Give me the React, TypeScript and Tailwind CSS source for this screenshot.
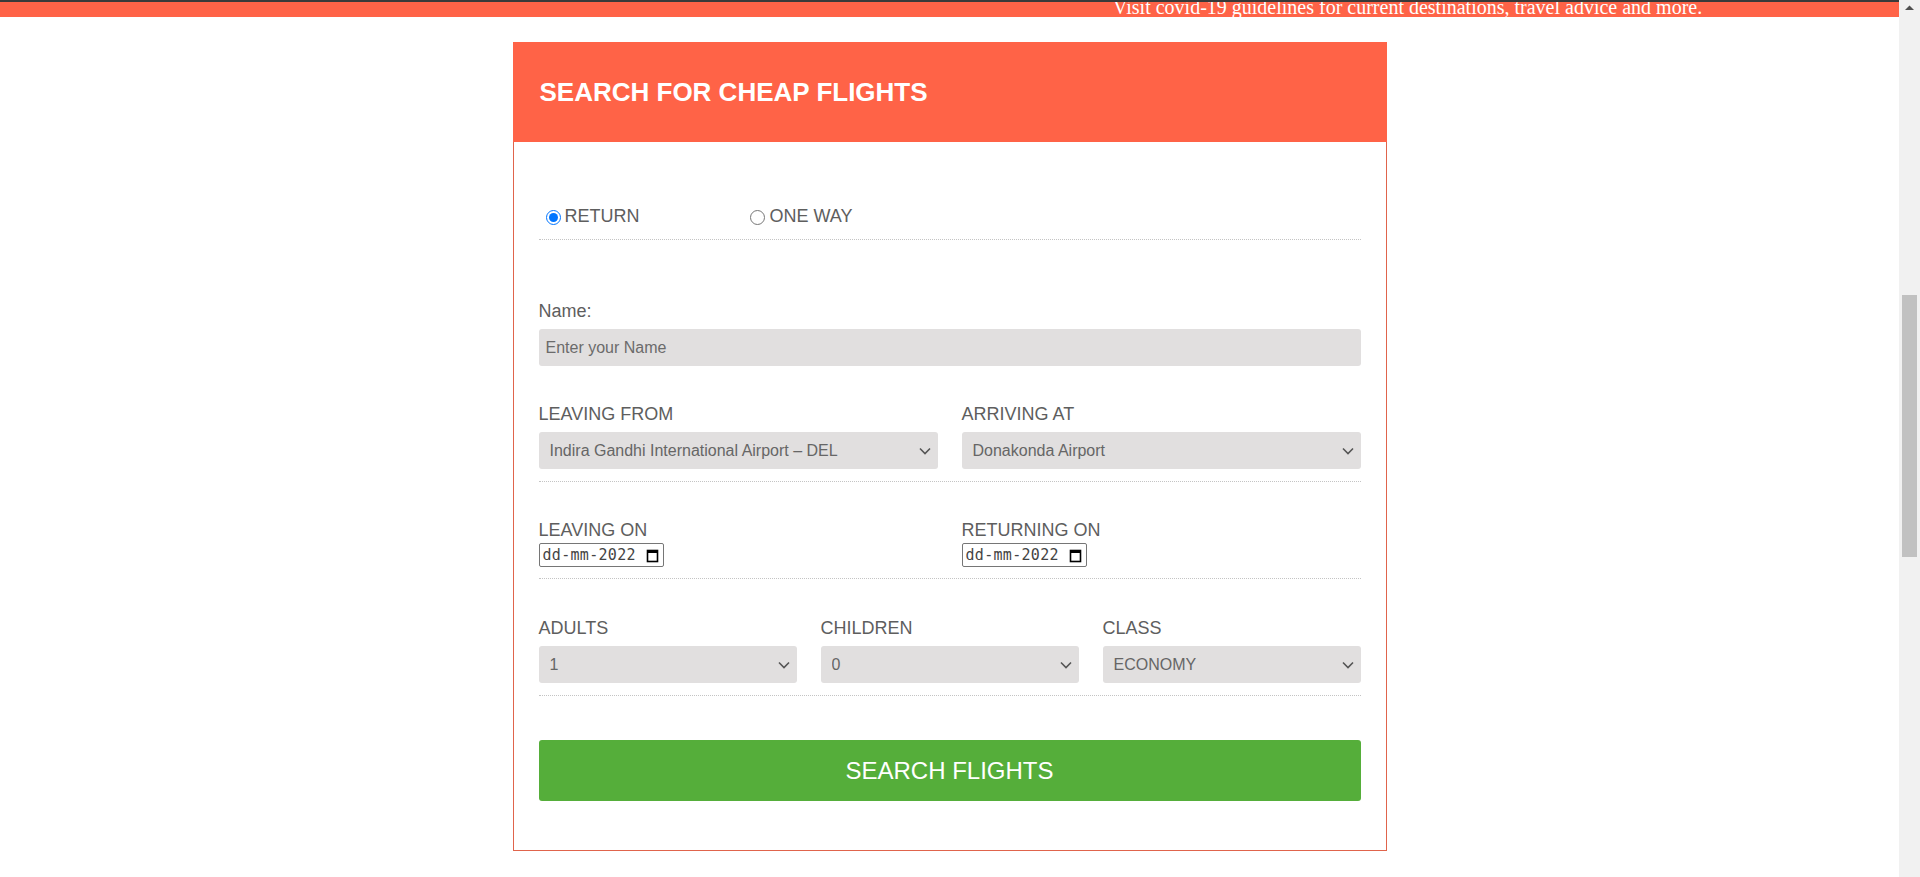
import { FC, ReactNode } from 'react'

const sans = { fontFamily: '"Liberation Sans", Arial, sans-serif' }

const Label: FC<{ children: ReactNode }> = ({ children }) => (
  <div className="text-[18px] leading-[22px] text-[#5e5e5e]">{children}</div>
)

const Select: FC<{ value: string }> = ({ value }) => (
  <div className="mt-[7px] h-[37px] rounded-[3px] bg-[#e1dfdf] flex items-center pl-[11px] pr-[7px]">
    <span className="flex-1 text-[16px] text-[#666] truncate">{value}</span>
    <svg width="12" height="8" viewBox="0 0 12 8">
      <path d="M1 1.5 L6 6.5 L11 1.5" fill="none" stroke="#555" strokeWidth="1.6" />
    </svg>
  </div>
)

const DateBox = () => (
  <div className="mt-[2px] inline-flex items-center h-[24px] w-[125px] border border-[#767676] rounded-[2px] px-[3px] gap-[3px] bg-white">
    <span
      className="text-[15px] text-[#444] tracking-[0.3px]"
      style={{ fontFamily: '"DejaVu Sans Mono", "Liberation Mono", monospace' }}
    >
      dd-mm-2022
    </span>
    <svg width="13" height="15" viewBox="0 0 13 15" className="ml-auto mr-[1px]">
      <rect x="1.5" y="2.5" width="10" height="11" fill="none" stroke="#000" strokeWidth="1.6" />
      <rect x="1" y="2" width="11" height="3" fill="#000" />
    </svg>
  </div>
)

const Divider = () => <div className="border-b border-dotted border-[#c4c4c4]" />

export default function App() {
  return (
    <div className="flex min-h-[877px] bg-white" style={sans}>
      <div className="flex-1 flex flex-col">
        {/* top banner, scrolled partly out of view */}
        <div className="h-[2px] bg-[#3a3a3a]" />
        <div className="h-[15px] bg-[#ff6347] overflow-hidden flex items-end pl-[1113px]">
          <span
            className="text-[20px] leading-none text-white whitespace-nowrap"
            style={{ fontFamily: '"Liberation Serif", "Times New Roman", serif' }}
          >
            Visit covid-19 guidelines for current destinations, travel advice and more.
          </span>
        </div>

        <div className="mt-[25px] mx-auto w-[874px] border border-[#e0644c] flex flex-col">
          <div className="h-[100px] -mt-px -mx-px bg-[#ff6347] flex items-center pl-[27px]">
            <h1 className="text-[26px] font-bold text-white">SEARCH FOR CHEAP FLIGHTS</h1>
          </div>

          <div className="px-[25px] pt-[63px] pb-[49px] flex flex-col">
            <div className="flex items-center h-[22px] text-[18px] text-[#5e5e5e] mb-[12px]">
              <label className="flex items-center w-[204px]">
                <input type="radio" name="trip" defaultChecked className="ml-[7px] mr-[4px] mt-[3px] size-[15px] accent-[#0075ff]" />
                RETURN
              </label>
              <label className="flex items-center">
                <input type="radio" name="trip" className="ml-[7px] mr-[5px] mt-[3px] size-[15px]" />
                ONE WAY
              </label>
            </div>
            <Divider />

            <div className="mt-[60px]">
              <Label>Name:</Label>
              <div className="mt-[7px] h-[37px] rounded-[3px] bg-[#e1dfdf] flex items-center px-[7px] text-[16px] text-[#6b6b6b]">
                Enter your Name
              </div>
            </div>

            <div className="mt-[37px] grid grid-cols-2 gap-x-[24px]">
              <div>
                <Label>LEAVING FROM</Label>
                <Select value="Indira Gandhi International Airport – DEL" />
              </div>
              <div>
                <Label>ARRIVING AT</Label>
                <Select value="Donakonda Airport" />
              </div>
            </div>
            <div className="mt-[12px]">
              <Divider />
            </div>

            <div className="mt-[37px] grid grid-cols-2 gap-x-[24px]">
              <div>
                <Label>LEAVING ON</Label>
                <DateBox />
              </div>
              <div>
                <Label>RETURNING ON</Label>
                <DateBox />
              </div>
            </div>
            <div className="mt-[11px]">
              <Divider />
            </div>

            <div className="mt-[38px] grid grid-cols-3 gap-x-[24px]">
              <div>
                <Label>ADULTS</Label>
                <Select value="1" />
              </div>
              <div>
                <Label>CHILDREN</Label>
                <Select value="0" />
              </div>
              <div>
                <Label>CLASS</Label>
                <Select value="ECONOMY" />
              </div>
            </div>
            <div className="mt-[12px]">
              <Divider />
            </div>

            <button className="mt-[44px] h-[61px] rounded-[3px] bg-[#55ae3a] text-white text-[24px]">
              SEARCH FLIGHTS
            </button>
          </div>
        </div>
        <div className="h-[26px]" />
      </div>

      {/* browser scrollbar */}
      <div className="w-[21px] shrink-0 bg-[#f1f1f1] flex flex-col items-center">
        <svg width="9" height="6" viewBox="0 0 9 6" className="mt-[5px]">
          <path d="M0 5 L4.5 0.5 L9 5 Z" fill="#505050" />
        </svg>
        <div className="mt-[284px] w-[15px] h-[262px] bg-[#c1c1c1]" />
      </div>
    </div>
  )
}
